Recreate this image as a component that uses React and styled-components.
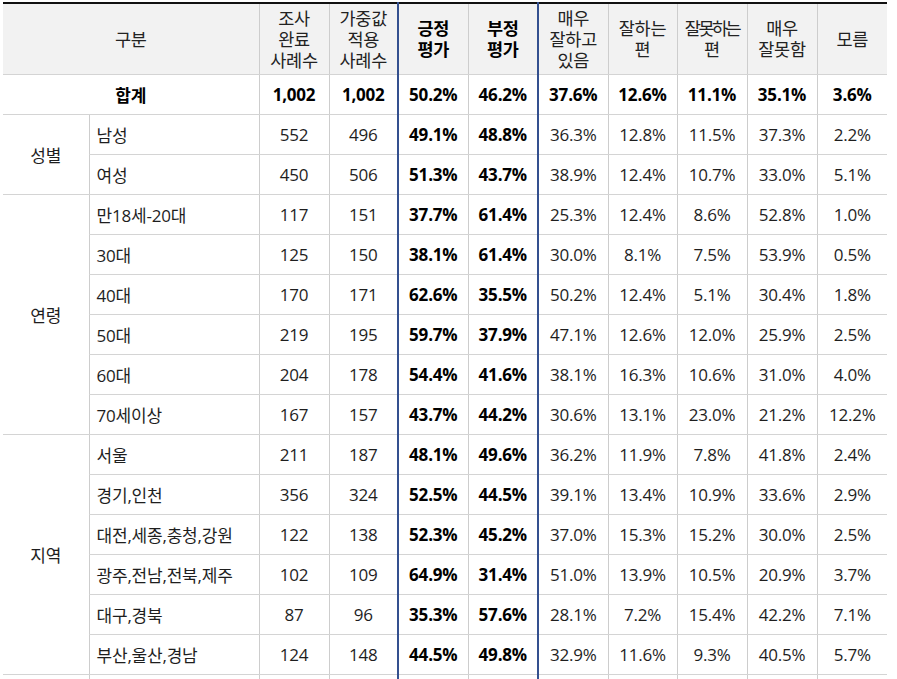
import React from "react";
import styled, { createGlobalStyle } from "styled-components";

const Global = createGlobalStyle`
  html, body { margin: 0; padding: 0; background: #fff; }
  body {
    padding: 2px 0 0 3px;
    font-family: "Open Sans", "Noto Sans CJK KR", sans-serif;
    color: #1a1a1a;
  }
`;

const Table = styled.table`
  border-collapse: collapse;
  table-layout: fixed;
  width: 884px;
  font-size: 17px;
  border-top: 2px solid #111;
`;

const Th = styled.th`
  background: #f2f2f2;
  height: 70px;
  padding: 0;
  font-size: 17.5px;
  font-weight: ${(p) => (p.$bold ? 700 : 400)};
  color: ${(p) => (p.$bold ? "#000" : "#222")};
  line-height: 21px;
  text-align: center;
  vertical-align: middle;
  border-left: 1px solid #cdcdcd;
  border-bottom: 1px solid #d4d4d4;
  letter-spacing: -0.3px;
  white-space: nowrap;
  ${(p) => p.$blueLeft && "border-left: 2px solid #34508f;"}
  ${(p) => p.$blueRight && "border-right: 2px solid #34508f;"}
  &:first-child { border-left: none; }
`;

const Tight = styled.span`
  letter-spacing: -2.5px;
`;

const Td = styled.td`
  height: ${(p) => (p.$h ? p.$h : 39)}px;
  padding: 0;
  padding-left: ${(p) => (p.$left ? "7px" : "0")};
  text-align: ${(p) => (p.$left ? "left" : "center")};
  vertical-align: middle;
  font-weight: ${(p) => (p.$bold ? 700 : 400)};
  color: ${(p) => (p.$bold ? "#000" : "#1e1e1e")};
  border-left: 1px solid #cdcdcd;
  border-bottom: 1px solid #d4d4d4;
  white-space: nowrap;
  letter-spacing: -0.2px;
  ${(p) => p.$blueLeft && "border-left: 2px solid #34508f;"}
  ${(p) => p.$blueRight && "border-right: 2px solid #34508f;"}
  ${(p) => p.$first && "border-left: none;"}
`;

const Col = styled.col`
  width: ${(p) => p.$w}px;
`;

const widths = [86, 170, 70, 69, 70, 70, 70, 69, 70, 70, 70];

const groups = [
  {
    name: "성별",
    rows: [
      ["남성", "552", "496", "49.1%", "48.8%", "36.3%", "12.8%", "11.5%", "37.3%", "2.2%"],
      ["여성", "450", "506", "51.3%", "43.7%", "38.9%", "12.4%", "10.7%", "33.0%", "5.1%"],
    ],
  },
  {
    name: "연령",
    rows: [
      ["만18세-20대", "117", "151", "37.7%", "61.4%", "25.3%", "12.4%", "8.6%", "52.8%", "1.0%"],
      ["30대", "125", "150", "38.1%", "61.4%", "30.0%", "8.1%", "7.5%", "53.9%", "0.5%"],
      ["40대", "170", "171", "62.6%", "35.5%", "50.2%", "12.4%", "5.1%", "30.4%", "1.8%"],
      ["50대", "219", "195", "59.7%", "37.9%", "47.1%", "12.6%", "12.0%", "25.9%", "2.5%"],
      ["60대", "204", "178", "54.4%", "41.6%", "38.1%", "16.3%", "10.6%", "31.0%", "4.0%"],
      ["70세이상", "167", "157", "43.7%", "44.2%", "30.6%", "13.1%", "23.0%", "21.2%", "12.2%"],
    ],
  },
  {
    name: "지역",
    rows: [
      ["서울", "211", "187", "48.1%", "49.6%", "36.2%", "11.9%", "7.8%", "41.8%", "2.4%"],
      ["경기,인천", "356", "324", "52.5%", "44.5%", "39.1%", "13.4%", "10.9%", "33.6%", "2.9%"],
      ["대전,세종,충청,강원", "122", "138", "52.3%", "45.2%", "37.0%", "15.3%", "15.2%", "30.0%", "2.5%"],
      ["광주,전남,전북,제주", "102", "109", "64.9%", "31.4%", "51.0%", "13.9%", "10.5%", "20.9%", "3.7%"],
      ["대구,경북", "87", "96", "35.3%", "57.6%", "28.1%", "7.2%", "15.4%", "42.2%", "7.1%"],
      ["부산,울산,경남", "124", "148", "44.5%", "49.8%", "32.9%", "11.6%", "9.3%", "40.5%", "5.7%"],
    ],
  },
  {
    name: "",
    rows: [["", "", "", "", "", "", "", "", "", ""]],
  },
];

const Cells = ({ r }) => (
  <>
    <Td $left>{r[0]}</Td>
    <Td>{r[1]}</Td>
    <Td>{r[2]}</Td>
    <Td $bold $blueLeft>{r[3]}</Td>
    <Td $bold $blueRight>{r[4]}</Td>
    <Td>{r[5]}</Td>
    <Td>{r[6]}</Td>
    <Td>{r[7]}</Td>
    <Td>{r[8]}</Td>
    <Td>{r[9]}</Td>
  </>
);

export default function App() {
  return (
    <>
      <Global />
      <Table>
        <colgroup>
          {widths.map((w, i) => (
            <Col key={i} $w={w} />
          ))}
        </colgroup>
        <thead>
          <tr>
            <Th colSpan={2}>구분</Th>
            <Th>조사<br />완료<br />사례수</Th>
            <Th>가중값<br />적용<br />사례수</Th>
            <Th $bold $blueLeft>긍정<br />평가</Th>
            <Th $bold $blueRight>부정<br />평가</Th>
            <Th>매우<br />잘하고<br />있음</Th>
            <Th>잘하는<br />편</Th>
            <Th><Tight>잘못하는</Tight><br />편</Th>
            <Th>매우<br />잘못함</Th>
            <Th>모름</Th>
          </tr>
        </thead>
        <tbody>
          <tr>
            <Td colSpan={2} $bold $first $h={38}>합계</Td>
            <Td $bold>1,002</Td>
            <Td $bold>1,002</Td>
            <Td $bold $blueLeft>50.2%</Td>
            <Td $bold $blueRight>46.2%</Td>
            <Td $bold>37.6%</Td>
            <Td $bold>12.6%</Td>
            <Td $bold>11.1%</Td>
            <Td $bold>35.1%</Td>
            <Td $bold>3.6%</Td>
          </tr>
          {groups.map((g) =>
            g.rows.map((r, i) => (
              <tr key={g.name + i}>
                {i === 0 && (
                  <Td $first rowSpan={g.rows.length}>
                    {g.name}
                  </Td>
                )}
                <Cells r={r} />
              </tr>
            ))
          )}
        </tbody>
      </Table>
    </>
  );
}
